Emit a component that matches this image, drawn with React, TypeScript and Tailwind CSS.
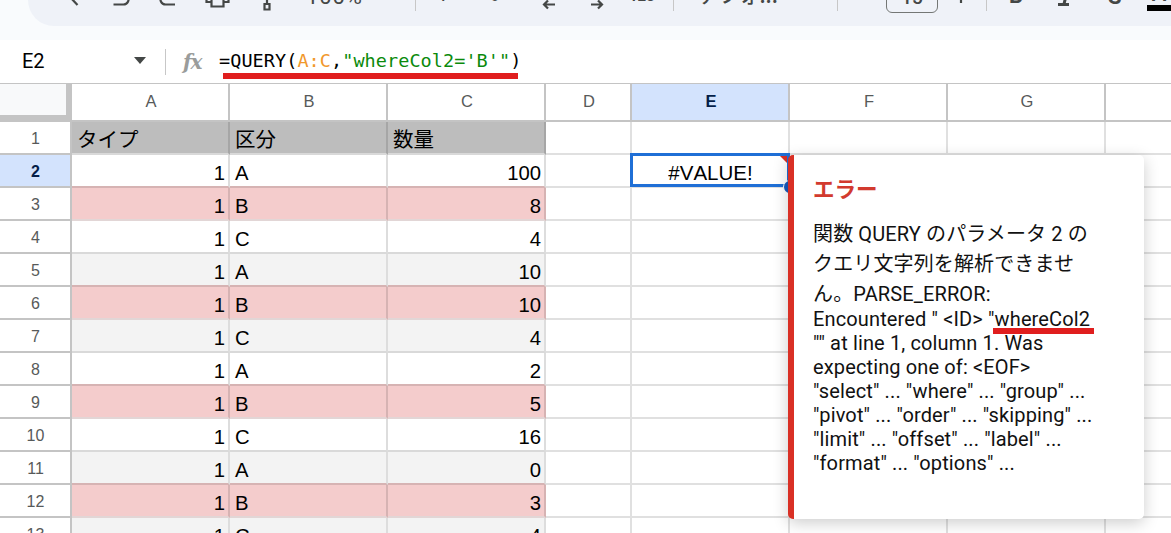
import type { ReactNode } from 'react';

type Row = { n: number; label: string; qty: string; tone: keyof typeof tones };

const tones = {
  plain: 'bg-white',
  band: 'bg-[#f3f3f3]',
  pink: 'bg-[#f4cccc]',
};

const rows: Row[] = [
  { n: 2, label: 'A', qty: '100', tone: 'plain' },
  { n: 3, label: 'B', qty: '8', tone: 'pink' },
  { n: 4, label: 'C', qty: '4', tone: 'plain' },
  { n: 5, label: 'A', qty: '10', tone: 'band' },
  { n: 6, label: 'B', qty: '10', tone: 'pink' },
  { n: 7, label: 'C', qty: '4', tone: 'band' },
  { n: 8, label: 'A', qty: '2', tone: 'plain' },
  { n: 9, label: 'B', qty: '5', tone: 'pink' },
  { n: 10, label: 'C', qty: '16', tone: 'plain' },
  { n: 11, label: 'A', qty: '0', tone: 'band' },
  { n: 12, label: 'B', qty: '3', tone: 'pink' },
  { n: 13, label: 'C', qty: '4', tone: 'band' },
];

const gridCols = 'grid grid-cols-[72px_158px_158px_158px_86px_158px_158px_158px_67px]';

function Icon({ children, className }: { children: ReactNode; className: string }) {
  return (
    <svg
      viewBox="0 0 30 26"
      className={`h-[26px] w-[30px] shrink-0 ${className}`}
      fill="none"
      stroke="#444746"
      strokeWidth="2.2"
    >
      {children}
    </svg>
  );
}

function Divider({ className }: { className: string }) {
  return <div className={`h-[11px] w-px shrink-0 bg-[#c7c7c7] ${className}`} />;
}

function Toolbar() {
  return (
    <div className="h-10 bg-[#f9fbfd] pl-7">
      <div className="flex h-[26px] items-start overflow-hidden rounded-bl-[26px] bg-[#eff2f8] text-[#444746]">
        <Icon className="ml-[32px]">
          <path d="M10 -3L17.5 5" />
        </Icon>
        <Icon className="ml-[18px]">
          <path d="M5.500 4.500h10a5 5 0 0 0 4-8" />
        </Icon>
        <Icon className="ml-[16px]">
          <path d="M21 4.500H11.500a5 5 0 0 1-4-8" />
        </Icon>
        <Icon className="ml-[19px]">
          <path d="M8.500 2H3.500v-6h22v6h-5M8.500 -1h12v7.500h-12z" />
        </Icon>
        <Icon className="ml-[20px]">
          <path d="M11.500 4h5v5.500h-5zM14 4V-2" />
        </Icon>
        <div className="-mt-[15px] ml-[23px] w-[58px] shrink-0 font-['Roboto'] text-[22px] leading-6 tracking-[0.9px]">
          100%
        </div>
        <Divider className="ml-[51px]" />
        <div className="-mt-[18px] ml-[22px] w-[12px] shrink-0 font-['Roboto'] text-[20px] leading-6">¥</div>
        <div className="-mt-[18px] ml-[34px] w-[20px] shrink-0 font-['Roboto'] text-[20px] leading-6">%</div>
        <Icon className="ml-[31px]">
          <path d="M9 4.500h11M13 .5l-4 4 4 4" />
        </Icon>
        <Icon className="ml-[18px]">
          <path d="M8 4.500h11M15 .5l4 4-4 4" />
        </Icon>
        <div className="-mt-[16px] ml-[16px] w-[30px] shrink-0 font-['Roboto'] text-[15px] font-bold leading-6">
          123
        </div>
        <Divider className="ml-[14px]" />
        <div className="-mt-[18px] ml-[24px] w-[88px] shrink-0 whitespace-nowrap font-['Noto_Sans_CJK_JP',sans-serif] text-[20.5px] font-medium leading-6">
          デフォ...
        </div>
        <Divider className="ml-[51px]" />
        <div className="-mt-[18px] ml-[48px] flex h-[31px] w-[52px] shrink-0 items-center justify-center rounded-[6px] border border-[#747775] font-['Roboto'] text-[19px] font-medium">
          <span className="mt-px">15</span>
        </div>
        <Icon className="ml-[12px]">
          <path d="M11 -5v8" />
        </Icon>
        <Divider className="ml-[6px]" />
        <div className="-mt-[16px] ml-[22px] w-4 shrink-0 font-['Roboto'] text-[22px] font-bold leading-6">B</div>
        <Icon className="ml-[25px]">
          <path d="M8 4.500h11M14 4L16 -4" strokeWidth="3" />
        </Icon>
        <div className="-mt-[15px] ml-[28px] w-4 shrink-0 font-['Roboto'] text-[22px] font-bold leading-6">S</div>
        <div className="-mt-[18px] ml-[23px] w-6 shrink-0 text-center font-['Roboto'] text-[22px] font-medium leading-6">
          <p className="h-[23px]">A</p>
          <div className="h-[6px] bg-black" />
        </div>
      </div>
    </div>
  );
}

function FormulaBar() {
  return (
    <div className="flex h-11 items-start border-b border-[#c4c4c4] bg-white">
      <div className="ml-[22px] mt-[9px] w-[112px] font-['Roboto'] text-[20px] leading-6 text-black">E2</div>
      <div className="mt-[17px] h-0 w-0 border-x-[6px] border-t-[7px] border-x-transparent border-t-[#444746]" />
      <div className="ml-[19px] mt-[9px] h-[26px] w-px bg-[#c7c7c7]" />
      <div className="ml-[17px] mt-[10px] w-[24px] font-['DejaVu_Serif'] text-[20px] font-bold italic leading-6 tracking-[-1px] text-[#9a9c9b]">
        fx
      </div>
      <div className="ml-[12px] mt-[9px] h-[32px] whitespace-pre font-['DejaVu_Sans_Mono'] text-[18.5px] leading-6 tracking-[0.06px] text-black">
        =QUERY(<span className="text-[#f1982c]">A:C</span>,
        <span className="text-[#0b8a0b]">"whereCol2='B'"</span>)
        <div className="ml-[4px] h-[6px] w-[295px] bg-[#e01e1e]" />
      </div>
    </div>
  );
}

function ColumnHeaders() {
  return (
    <div className={`${gridCols} h-[38px] font-['Liberation_Sans'] text-[16.5px] text-[#575a5a]`}>
      <div className="border-b-[7px] border-r-[6px] border-[#c4c4c4] bg-[#f8f9fa]" />
      {['A', 'B', 'C', 'D', 'E', 'F', 'G', ''].map((name) => (
        <div
          key={name}
          className={`flex items-center justify-center border-b-2 border-r-2 border-[#c4c4c4] pb-[2px] pl-[2px] ${
            name === 'E' ? 'bg-[#d3e3fd] font-bold text-[#041e49]' : 'bg-white'
          }`}
        >
          {name}
        </div>
      ))}
    </div>
  );
}

function RowNumber({ n }: { n: number }) {
  return (
    <div
      className={`flex items-center justify-center border-b-2 border-r-2 border-[#c4c4c4] pl-px pt-[2px] text-[16px] ${
        n === 2 ? 'bg-[#d3e3fd] font-bold text-[#041e49]' : 'bg-white text-[#575a5a]'
      }`}
    >
      {n}
    </div>
  );
}

function EmptyCells() {
  return (
    <>
      {['D', 'E', 'F', 'G', 'H'].map((c) => (
        <div key={c} className="border-b-2 border-r-2 border-[#e0e0e0] bg-white" />
      ))}
    </>
  );
}

function DataRow({ row, nextTone }: { row: Row; nextTone?: string }) {
  const bottom =
    nextTone === 'pink' ? 'border-b-[#d6b3b3]' : row.tone === 'pink' ? 'border-b-[#e2d6d6]' : 'border-b-[#d9d9d9]';
  const right = row.tone === 'pink' ? 'border-r-[#d6b3b3]' : 'border-r-[#dddddd]';
  const cell = `flex items-center border-b-2 border-r-2 pl-[5px] pr-[3px] pt-[4px] ${bottom} ${right} ${tones[row.tone]}`;
  return (
    <div className={`${gridCols} h-[33px]`}>
      <RowNumber n={row.n} />
      <div className={`${cell} justify-end`}>1</div>
      <div className={cell}>{row.label}</div>
      <div className={`${cell} justify-end`}>{row.qty}</div>
      <EmptyCells />
    </div>
  );
}

function Sheet() {
  return (
    <div className="font-['Liberation_Sans'] text-[20.3px] leading-6 text-black">
      <div className={`${gridCols} h-[33px]`}>
        <RowNumber n={1} />
        {['タイプ', '区分', '数量'].map((title) => (
          <div
            key={title}
            className="flex items-center border-b-2 border-r-2 border-b-[#d9d9d9] border-r-[#a6a6a6] bg-[#bdbdbd] pl-[5px] pt-px font-['Noto_Sans_CJK_JP',sans-serif] text-[20.5px]"
          >
            {title}
          </div>
        ))}
        <EmptyCells />
      </div>
      {rows.map((row, i) => (
        <DataRow key={row.n} row={row} nextTone={rows[i + 1]?.tone} />
      ))}
    </div>
  );
}

function ActiveCell() {
  return (
    <div className="absolute left-[630px] top-[153px] flex h-[34px] w-[160px] items-center justify-center border-[3px] border-[#1f6fd6] bg-white pl-px pt-[6px] font-['Liberation_Sans'] text-[20.5px] leading-6 text-black [font-kerning:none]">
      #VALUE!
      <div className="absolute right-0 top-0 h-0 w-0 border-l-[7px] border-t-[7px] border-l-transparent border-t-[#d93025]" />
      <div className="absolute -bottom-[10px] -right-[10px] h-[14px] w-[14px] rounded-full border border-white bg-[#185abc]" />
    </div>
  );
}

function ErrorTooltip() {
  return (
    <div className="absolute left-[788px] top-[155px] h-[364px] w-[356px] rounded-[5px] border-l-[6px] border-[#d93025] bg-white pl-[19px] pt-[19px] shadow-[0_4px_16px_rgba(0,0,0,0.2)]">
      <h2 className="font-['Noto_Sans_CJK_JP',sans-serif] text-[21.5px] font-bold leading-7 text-[#d23a2e]">エラー</h2>
      <div className="mt-[17px] whitespace-nowrap font-['Roboto','Noto_Sans_CJK_JP',sans-serif] text-[20px] leading-6 tracking-[0.13px] text-[#111]">
        <div className="leading-[30px]">
          <p>関数 QUERY のパラメータ 2 の</p>
          <p>クエリ文字列を解析できませ</p>
          <p>ん。PARSE_ERROR:</p>
        </div>
        <p className="-mt-[2px]">
          Encountered " &lt;ID&gt; "
          <span className="relative">
            whereCol2
            <span className="absolute -bottom-[3px] -left-[2px] h-[6px] w-[101px] bg-[#e01e1e]" />
          </span>
        </p>
        <p>"" at line 1, column 1. Was</p>
        <p>expecting one of: &lt;EOF&gt;</p>
        <p>"select" ... "where" ... "group" ...</p>
        <p>"pivot" ... "order" ... "skipping" ...</p>
        <p>"limit" ... "offset" ... "label" ...</p>
        <p>"format" ... "options" ...</p>
      </div>
    </div>
  );
}

export default function App() {
  return (
    <main className="relative h-[533px] w-[1171px] overflow-hidden bg-white">
      <Toolbar />
      <FormulaBar />
      <ColumnHeaders />
      <Sheet />
      <ActiveCell />
      <ErrorTooltip />
    </main>
  );
}
